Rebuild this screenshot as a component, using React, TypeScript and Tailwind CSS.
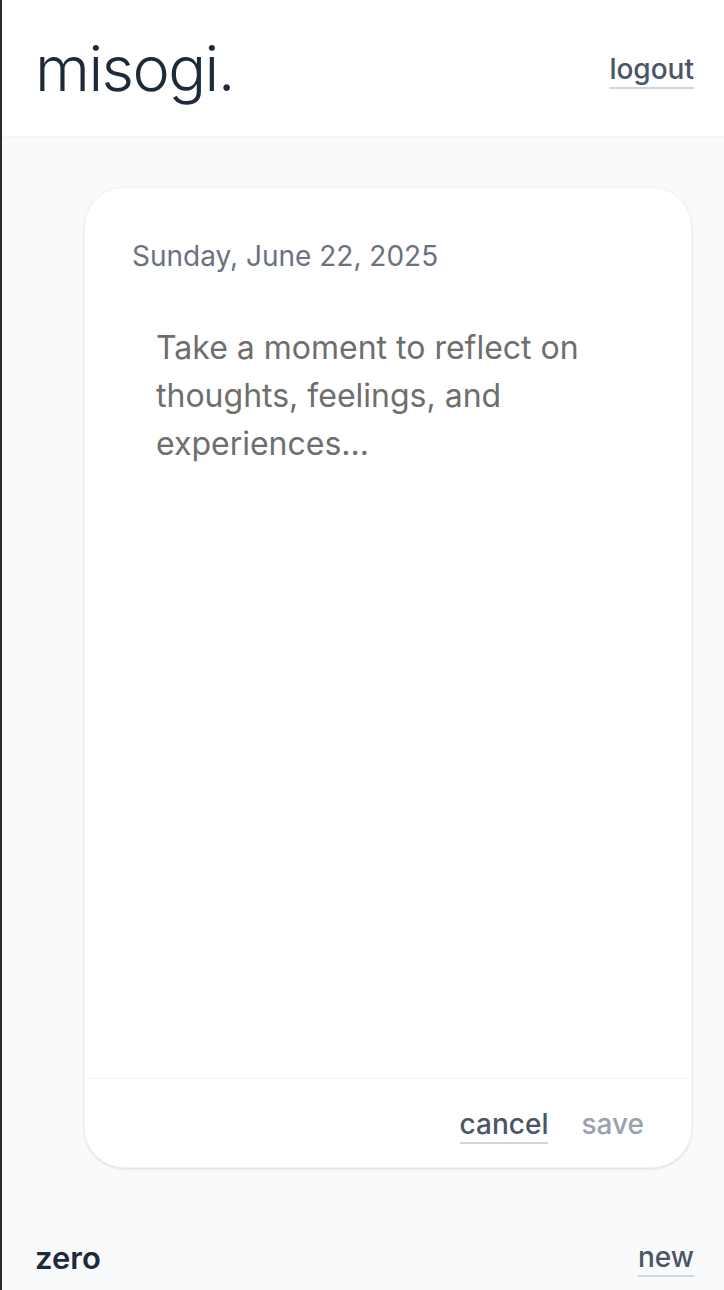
import React from 'react';

const App = () => {
  return (
    <div className="min-h-[1290px] bg-gray-50 border-l-2 border-[#2a2a2a] flex flex-col font-['Inter',sans-serif]">
      <header className="h-[137px] bg-white border-b border-gray-100 flex items-center justify-between pl-[33px] pr-[30px]">
        <h1 className="text-[63px] font-light text-gray-800 tracking-tight leading-none">misogi.</h1>
        <button className="text-[28px] font-medium text-gray-600 border-b-2 border-gray-300 leading-tight mt-1">logout</button>
      </header>

      <main className="flex-1 pt-[50px] pl-[82px] pr-[32px]">
        <div className="h-[981px] bg-white rounded-[40px] border border-gray-100 shadow-sm flex flex-col">
          <div className="flex-1 px-[47px] pt-[47px]">
            <div className="text-[28px] text-gray-500">Sunday, June 22, 2025</div>
            <div className="mt-[47px] pl-[24px] pr-[60px] text-[32px] leading-[48px] text-[#6e6e6e]">
              Take a moment to reflect on thoughts, feelings, and experiences...
            </div>
          </div>
          <div className="h-[89px] border-t border-gray-100 flex items-center justify-end gap-[33px] pr-[47px]">
            <button className="text-[28px] font-medium text-gray-600 border-b-2 border-gray-300 leading-tight mt-1">cancel</button>
            <button className="text-[28px] font-medium text-gray-400 border-b-2 border-transparent leading-tight mt-1">save</button>
          </div>
        </div>
      </main>

      <footer className="h-[95px] flex items-center justify-between pl-[33px] pr-[30px] pt-[32px]">
        <span className="text-[31px] font-semibold text-gray-800">zero</span>
        <button className="text-[28px] font-medium text-gray-600 border-b-2 border-gray-300 leading-tight">new</button>
      </footer>
    </div>
  );
};

export default App;
